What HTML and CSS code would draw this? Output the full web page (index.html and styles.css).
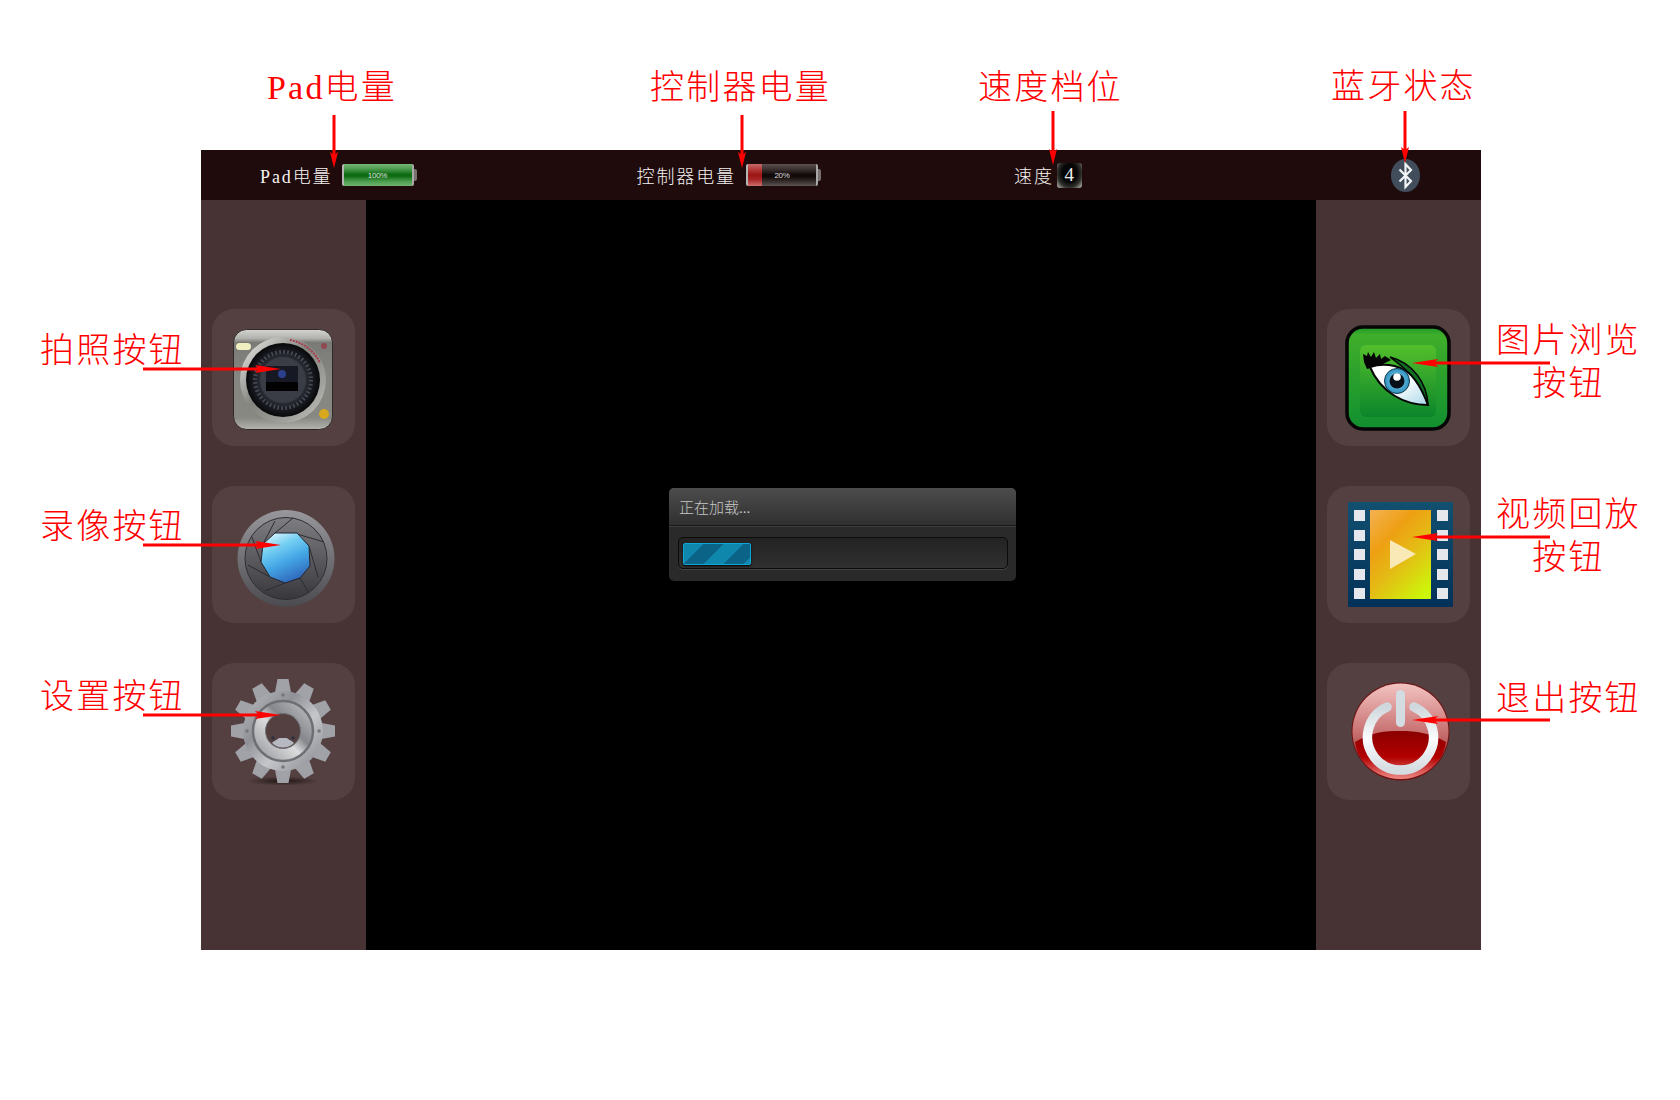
FILE: index.html
```html
<!DOCTYPE html>
<html lang="zh">
<head>
<meta charset="utf-8">
<title>界面说明</title>
<link rel="stylesheet" href="styles.css">
</head>
<body>
<div class="page">
  <div class="frame">
    <header class="topbar">
      <div class="status status-pad"><span>Pad电量</span>
        <div class="battery battery-full"><b class="level level-100"></b><i>100%</i></div></div>
      <div class="status status-ctrl"><span>控制器电量</span>
        <div class="battery battery-low"><b class="level level-20"></b><i>20%</i></div></div>
      <div class="status status-speed"><span>速度</span><div class="speed">4</div></div>
      <div class="bt">
        <svg width="29" height="33" viewBox="0 0 29 33"><ellipse cx="14.5" cy="16.5" rx="14.5" ry="16.5" fill="#414d5a"/><path d="M8.5 10.5 20 22l-5.5 6V5l5.500 6L8.500 22.500" fill="none" stroke="#f2f4f5" stroke-width="2.200"/></svg>
      </div>
    </header>
    <main class="body">
      <aside class="side">
        <div class="card">
          <svg class="icon icon-camera" width="100" height="102" viewBox="0 0 100 102">
            <defs>
              <linearGradient id="camBody" x1="0" y1="0" x2="0" y2="1"><stop offset="0" stop-color="#d4d4d2"/><stop offset=".09" stop-color="#b0b0ac"/><stop offset=".13" stop-color="#7a7a76"/><stop offset=".5" stop-color="#868682"/><stop offset=".88" stop-color="#888882"/><stop offset="1" stop-color="#b4b4ae"/></linearGradient>
              <linearGradient id="camRing" x1="0" y1="0" x2="1" y2="1"><stop offset="0" stop-color="#f0f0ee"/><stop offset=".45" stop-color="#84847f"/><stop offset=".75" stop-color="#a0a09c"/><stop offset="1" stop-color="#c8c8c4"/></linearGradient>
              <radialGradient id="camLens"><stop offset="0" stop-color="#4a4e58"/><stop offset=".6" stop-color="#2a2e36"/><stop offset=".85" stop-color="#14161b"/><stop offset="1" stop-color="#08080a"/></radialGradient>
            </defs>
            <rect x="0.500" y="0.500" width="99" height="100" rx="13" fill="url(#camBody)" stroke="#2e2827"/>
            <circle cx="50" cy="51" r="43" fill="url(#camRing)"/>
            <circle cx="50" cy="51" r="37" fill="url(#camLens)"/>
            <circle cx="50" cy="51" r="28" fill="none" stroke="#4a4e57" stroke-width="4" stroke-dasharray="1.500 2.500"/>
            <circle cx="50" cy="51" r="23" fill="#3a3d45"/>
            <rect x="33" y="37" width="32" height="16" fill="#161924"/>
            <rect x="33" y="53" width="32" height="9" fill="#020203"/>
            <circle cx="49" cy="45" r="4" fill="#2c3f8c"/>
            <rect x="3" y="14" width="15" height="7" rx="3.500" fill="#efeec0"/>
            <circle cx="91" cy="17" r="3" fill="#8e4a50"/>
            <path d="M57 11a41 41 0 0 1 30 23" fill="none" stroke="#a83a4a" stroke-width="2" stroke-dasharray="2 1"/>
            <circle cx="91" cy="85" r="5" fill="#d8a81e"/>
          </svg>
        </div>
        <div class="card">
          <svg class="icon icon-shutter" width="98" height="99" viewBox="0 0 98 99">
            <defs>
              <linearGradient id="shOuter" x1="0" y1="0" x2="0" y2="1"><stop offset="0" stop-color="#98989c"/><stop offset="1" stop-color="#4a4a4f"/></linearGradient>
              <linearGradient id="shInner" x1="0" y1="0" x2="0" y2="1"><stop offset="0" stop-color="#7d7d82"/><stop offset="1" stop-color="#37373c"/></linearGradient>
              <linearGradient id="shBlue" x1="0.150" y1="0" x2="0.600" y2="1"><stop offset="0" stop-color="#e2f6fc"/><stop offset=".3" stop-color="#76d0f4"/><stop offset=".6" stop-color="#45a8e6"/><stop offset="1" stop-color="#2f66ba"/></linearGradient>
            </defs>
            <circle cx="49" cy="49.500" r="48.500" fill="url(#shOuter)"/>
            <circle cx="49" cy="49.500" r="41" fill="url(#shInner)" stroke="#2e2e33" stroke-width="1"/>
            <path d="M38 24 56 9M60 25 87 33M72 37 81 68M63 69 72 84M48 74 28 82M33 68 11 56M24 53 15 28M26 35 38 12" fill="none" stroke="#2c2c31" stroke-width="1"/>
            <path d="M38 24h22l12 13 1 20-10 12-15 5-15-6-9-15 2-18z" fill="url(#shBlue)" stroke="#22252e"/>
          </svg>
        </div>
        <div class="card">
          <svg class="icon icon-gear" width="106" height="110" viewBox="0 0 106 110">
            <defs>
              <linearGradient id="gearMetal" x1="0" y1="0" x2="1" y2="1"><stop offset="0" stop-color="#b9bbc0"/><stop offset=".35" stop-color="#8f9196"/><stop offset=".6" stop-color="#c4c6ca"/><stop offset="1" stop-color="#83858b"/></linearGradient>
              <linearGradient id="gearRing" x1="1" y1="0" x2="0" y2="1"><stop offset="0" stop-color="#c8c9cc"/><stop offset=".4" stop-color="#85878c"/><stop offset=".55" stop-color="#dcdcde"/><stop offset="1" stop-color="#8a8c90"/></linearGradient>
              <radialGradient id="gearShadow"><stop offset="0" stop-color="#1b1210" stop-opacity=".9"/><stop offset="1" stop-color="#1b1210" stop-opacity="0"/></radialGradient>
              <path id="tooth" d="M46.500 1h11l3 16h-17z" fill="#a0a2a7"/>
            </defs>
            <ellipse cx="52" cy="103" rx="36" ry="4.500" fill="url(#gearShadow)"/>
            <use href="#tooth" transform="rotate(0 52 53)"/>
            <use href="#tooth" transform="rotate(30 52 53)"/>
            <use href="#tooth" transform="rotate(60 52 53)"/>
            <use href="#tooth" transform="rotate(90 52 53)"/>
            <use href="#tooth" transform="rotate(120 52 53)"/>
            <use href="#tooth" transform="rotate(150 52 53)"/>
            <use href="#tooth" transform="rotate(180 52 53)"/>
            <use href="#tooth" transform="rotate(210 52 53)"/>
            <use href="#tooth" transform="rotate(240 52 53)"/>
            <use href="#tooth" transform="rotate(270 52 53)"/>
            <use href="#tooth" transform="rotate(300 52 53)"/>
            <use href="#tooth" transform="rotate(330 52 53)"/>
            <circle cx="52" cy="53" r="40" fill="url(#gearMetal)"/>
            <circle cx="52" cy="53" r="30" fill="url(#gearRing)" stroke="#6d6f74" stroke-width="2.500"/>
            <circle cx="52" cy="53" r="17.500" fill="#544040" stroke="#6f7176"/>
            <path d="M41 65c3-3 5-3 7-5h8c2 2 4 2 7 5-6 6-16 6-22 0z" fill="#b6b9c2"/>
            <circle cx="42" cy="60" r="1.800" fill="#2e3040"/><circle cx="62" cy="60" r="1.800" fill="#2e3040"/>
            <circle cx="52" cy="17" r="1.800" fill="#777"/><circle cx="52" cy="89" r="1.800" fill="#777"/><circle cx="16" cy="53" r="1.800" fill="#777"/><circle cx="88" cy="53" r="1.800" fill="#777"/>
          </svg>
        </div>
      </aside>
      <section class="stage">
        <div class="dialog">
          <div class="dialog-title">正在加载...</div>
          <div class="dialog-body">
            <div class="track"><div class="fill"></div></div>
          </div>
        </div>
      </section>
      <aside class="side">
        <div class="card">
          <svg class="icon icon-eye" width="106" height="106" viewBox="0 0 106 106">
            <defs>
              <linearGradient id="eyeBg" x1="0" y1="0" x2="0" y2="1"><stop offset="0" stop-color="#1f9a2b"/><stop offset=".08" stop-color="#3fae2a"/><stop offset="1" stop-color="#119030"/></linearGradient>
              <linearGradient id="eyeIn" x1="0" y1="0" x2="0" y2="1"><stop offset="0" stop-color="#54bf2c"/><stop offset="1" stop-color="#0a852b"/></linearGradient>
              <linearGradient id="eyeWhite" x1="0" y1="0" x2="1" y2="1"><stop offset=".5" stop-color="#fff"/><stop offset="1" stop-color="#a9d7e8"/></linearGradient>
              <radialGradient id="iris"><stop offset="0" stop-color="#8fd0ea"/><stop offset="1" stop-color="#2d93c0"/></radialGradient>
            </defs>
            <rect x="2" y="2" width="102" height="102" rx="16" fill="url(#eyeBg)" stroke="#060606" stroke-width="3.500"/>
            <rect x="15" y="20" width="76" height="72" rx="6" fill="url(#eyeIn)"/>
            <path d="M18 29l4 2 1-4 3 5 3-5 2 6 4-4 1 5 4-3 6 4-10 5-14 4-3-7z" fill="#050505"/>
            <path d="M25 42C40 37 60 40 70 55 76 63 80 72 83 80 60 80 36 68 25 42z" fill="url(#eyeWhite)" stroke="#050505" stroke-width="2"/>
            <path d="M45 32C68 38 82 58 83 80 78 66 72 54 62 46 56 40 50 36 45 32z" fill="#0f6e20" stroke="#050505" stroke-width="1.500"/>
            <circle cx="52" cy="56" r="12.500" fill="url(#iris)" stroke="#12384e" stroke-width="1"/>
            <circle cx="52" cy="56" r="7.500" fill="#071018"/>
            <circle cx="52" cy="52" r="3.800" fill="#fff"/>
          </svg>
        </div>
        <div class="card">
          <svg class="icon icon-film" width="105" height="105" viewBox="0 0 105 105">
            <defs>
              <linearGradient id="filmBg" x1="0" y1="0" x2="0" y2="1"><stop offset="0" stop-color="#125070"/><stop offset="1" stop-color="#033159"/></linearGradient>
              <linearGradient id="filmFr" x1=".1" y1="0" x2=".8" y2="1"><stop offset="0" stop-color="#f3b04a"/><stop offset=".3" stop-color="#ee9f13"/><stop offset=".6" stop-color="#e4bd14"/><stop offset="1" stop-color="#ccf50a"/></linearGradient>
            </defs>
            <rect width="105" height="105" fill="url(#filmBg)"/>
            <rect x="22" y="8" width="61" height="89" fill="url(#filmFr)"/>
            <path d="M42 38 68 52 42 67z" fill="#f8e9b6"/>
            <g fill="#e6e7ec">
              <rect x="6" y="8" width="11" height="11"/><rect x="6" y="28" width="11" height="11"/><rect x="6" y="47" width="11" height="11"/><rect x="6" y="67" width="11" height="11"/><rect x="6" y="86" width="11" height="11"/>
              <rect x="89" y="8" width="11" height="11"/><rect x="89" y="28" width="11" height="11"/><rect x="89" y="47" width="11" height="11"/><rect x="89" y="67" width="11" height="11"/><rect x="89" y="86" width="11" height="11"/>
            </g>
          </svg>
        </div>
        <div class="card">
          <svg class="icon icon-power" width="99" height="99" viewBox="0 0 99 99">
            <defs>
              <linearGradient id="pwTop" x1="0" y1="0" x2="0" y2="1"><stop offset="0" stop-color="#f2c4c2"/><stop offset=".5" stop-color="#c97272"/><stop offset="1" stop-color="#8a1414"/></linearGradient>
              <linearGradient id="pwLow" x1="0" y1="0" x2="0" y2="1"><stop offset="0" stop-color="#8a0000"/><stop offset=".55" stop-color="#b30000"/><stop offset="1" stop-color="#ef8a86"/></linearGradient>
              <linearGradient id="pwRing" x1="0" y1="0" x2="0" y2="1"><stop offset="0" stop-color="#cfd8dd"/><stop offset=".5" stop-color="#fbfcfd"/><stop offset="1" stop-color="#d5dde2"/></linearGradient>
            </defs>
            <circle cx="49.500" cy="49.500" r="49" fill="#6e1010"/>
            <circle cx="49.500" cy="49.500" r="48" fill="url(#pwTop)"/>
            <path d="M4 60C20 50 34 49 49.500 49 65 49 80 51 95 60 92 82 72 97 49.500 97 27 97 7 82 4 60z" fill="url(#pwLow)"/>
            <path d="M36 25a33 33 0 1 0 27 0" fill="none" stroke="url(#pwRing)" stroke-width="9.500" stroke-linecap="round"/>
            <rect x="45" y="8" width="9" height="37" rx="4.500" fill="#d3dce1"/>
          </svg>
        </div>
      </aside>
    </main>
  </div>

  <svg class="arrows" width="1680" height="1100" viewBox="0 0 1680 1100">
    <g fill="#f00">
      <rect x="332.500" y="115" width="3" height="40"/><path d="M334 168l-4-16 4 3 4-3z"/>
      <rect x="740.500" y="115" width="3" height="40"/><path d="M742 168l-4-16 4 3 4-3z"/>
      <rect x="1051.500" y="111" width="3" height="42"/><path d="M1053 165l-4-16 4 3 4-3z"/>
      <rect x="1403.500" y="111" width="3" height="40"/><path d="M1405 163l-4-16 4 3 4-3z"/>
      <rect x="143" y="367.500" width="125" height="3"/><path d="M281 369l-26-4 4 4-4 4z"/>
      <rect x="143" y="543.500" width="125" height="3"/><path d="M281 545l-26-4 4 4-4 4z"/>
      <rect x="143" y="713.500" width="125" height="3"/><path d="M281 715l-26-4 4 4-4 4z"/>
      <rect x="1425" y="361.500" width="125" height="3"/><path d="M1412 363l26-4-4 4 4 4z"/>
      <rect x="1425" y="535.500" width="125" height="3"/><path d="M1412 537l26-4-4 4 4 4z"/>
      <rect x="1425" y="718.500" width="125" height="3"/><path d="M1412 720l26-4-4 4 4 4z"/>
    </g>
  </svg>
  <div class="note n-pad">Pad电量</div>
  <div class="note n-ctrl">控制器电量</div>
  <div class="note n-speed">速度档位</div>
  <div class="note n-bt">蓝牙状态</div>
  <div class="note n-photo">拍照按钮</div>
  <div class="note n-video">录像按钮</div>
  <div class="note n-set">设置按钮</div>
  <div class="note n-browse">图片浏览<br>按钮</div>
  <div class="note n-replay">视频回放<br>按钮</div>
  <div class="note n-exit">退出按钮</div>
</div>
</body>
</html>
```

FILE: styles.css
```css
* { box-sizing: border-box; }
html, body { margin: 0; padding: 0; background: #fff; }
body { font-family: "Liberation Serif", "Noto Sans CJK SC", serif; }

.page { position: relative; width: 1680px; height: 1100px; padding: 150px 0 0 201px; overflow: hidden; }
.frame { width: 1280px; height: 800px; display: flex; flex-direction: column; }

.topbar { height: 50px; background: #1f0b0b; display: flex; align-items: center; padding-left: 59px; color: #f4f2f0; font-size: 18px; font-weight: 300; }
.status { display: flex; align-items: center; }
.status-pad { gap: 9px; }
.status-ctrl { gap: 10px; margin-left: 219px; }
.status-speed { gap: 3px; margin-left: 192px; }
.status span { letter-spacing: 1.9px; }
.bt { margin-left: 309px; display: flex; height: 33px; margin-top: 1px; }

.battery { position: relative; width: 72px; height: 22px; margin-right: 4px; border-left: 2px solid #b5b5b5; border-right: 2px solid #a8a8a8; border-radius: 2px; }
.battery::after { content: ""; position: absolute; right: -5px; top: 5px; width: 3px; height: 12px; background: #77706f; border-radius: 0 2px 2px 0; }
.battery-full { background: linear-gradient(#75b876 0, #4d9c4f 22%, #0d6b12 48%, #0d6b12 55%, #4f9f50 80%, #70b372 100%); }
.battery-low { background: linear-gradient(#5a5050 0, #3d3333 22%, #120a0a 48%, #120a0a 58%, #3b3131 82%, #5c5454 100%); }
.level { display: block; height: 100%; }
.level-100 { width: 100%; }
.level-20 { width: 20%; background: linear-gradient(#c46a6a 0, #b53a3a 25%, #9a1414 50%, #a92525 70%, #cf6f6f 100%); }
.battery i { position: absolute; inset: 0; display: flex; align-items: center; justify-content: center; font-style: normal; font-family: "Liberation Sans", sans-serif; font-size: 8px; letter-spacing: -.3px; color: #dcdcdc; }

.speed { width: 25px; height: 25px; display: flex; align-items: center; justify-content: center; border-radius: 3px; font-size: 19px; background: radial-gradient(ellipse at 50% 40%, #060606 42%, #2f2f2c 68%, #c8c8bc 100%); color: #eee; }

.body { flex: 1; display: flex; min-height: 0; }
.side { width: 165px; background: #483334; display: flex; flex-direction: column; align-items: center; gap: 40px; padding-top: 109px; }
.card { width: 143px; height: 137px; border-radius: 22px; background: #544040; display: flex; align-items: flex-start; }
.icon { display: block; flex: none; filter: blur(.35px); }
.icon-camera { margin: 20px 0 0 21px; }
.icon-shutter { margin: 23px 0 0 25px; }
.icon-gear { margin: 15px 0 0 19px; }
.icon-eye { margin: 16px 0 0 18px; }
.icon-film { margin: 16px 0 0 21px; }
.icon-power { margin: 19px 0 0 24px; }

.stage { flex: 1; background: #000; display: flex; justify-content: center; align-items: flex-start; padding-top: 288px; }
.dialog { width: 347px; height: 93px; margin-left: 3px; border-radius: 5px; overflow: hidden; background: #2a2a2a; }
.dialog-title { height: 38px; padding-left: 10px; display: flex; align-items: center; font-size: 15px; font-weight: 300; color: #c6c6c6; background: linear-gradient(#4c4c4c, #303030); border-bottom: 1px solid #171717; box-shadow: 0 1px 0 #3f3f3f; }
.dialog-body { padding: 11px 8px 0 9px; }
.track { height: 32px; border: 1px solid #0c0c0c; border-radius: 5px; background: linear-gradient(#232323, #303030); box-shadow: 0 1px 0 #444; padding: 5px 0 0 4px; }
.fill { width: 68px; height: 22px; border: 1px solid #11a6d8; border-radius: 2px; background: repeating-linear-gradient(135deg, #0f87ad 0 14px, #0b6488 14px 28px); box-shadow: 0 1px 2px #000; }

.arrows { position: absolute; left: 0; top: 0; pointer-events: none; }
.note { position: absolute; color: #f00; font-size: 34px; letter-spacing: 2.200px; line-height: 43px; font-weight: 300; text-align: center; white-space: nowrap; }
.n-pad { left: 267px; top: 66px; }
.n-ctrl { left: 650px; top: 66px; }
.n-speed { left: 978px; top: 66px; }
.n-bt { left: 1331px; top: 65px; }
.n-photo { left: 40px; top: 329px; }
.n-video { left: 40px; top: 505px; }
.n-set { left: 40px; top: 675px; }
.n-browse { left: 1496px; top: 319px; }
.n-replay { left: 1496px; top: 493px; }
.n-exit { left: 1496px; top: 677px; }
```
